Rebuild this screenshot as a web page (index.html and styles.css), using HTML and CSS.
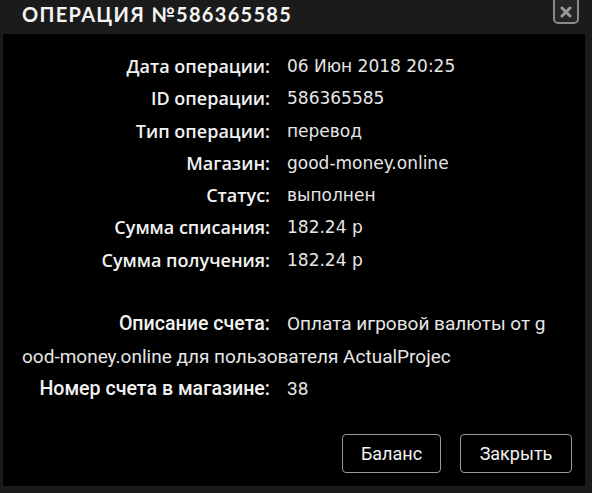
FILE: index.html
```html
<!DOCTYPE html>
<html lang="ru">
<head>
  <meta charset="UTF-8">
  <title>Операция №586365585</title>
  <link rel="stylesheet" href="styles.css">
</head>
<body>
  <div class="modal">
    <!-- Header -->
    <div class="modal-header">
      <h1>Операция №586365585</h1>
      <button class="close-btn" title="Закрыть">
        <svg width="12" height="12" viewBox="0 0 12 12"><path d="M2 2 L10 10 M10 2 L2 10" stroke="#9a9a9a" stroke-width="3" stroke-linecap="round"/></svg>
      </button>
    </div>

    <!-- Body -->
    <div class="modal-body">
      <div class="row"><span class="label">Дата операции:</span><span class="value">06 Июн 2018 20:25</span></div>
      <div class="row"><span class="label">ID операции:</span><span class="value">586365585</span></div>
      <div class="row"><span class="label">Тип операции:</span><span class="value">перевод</span></div>
      <div class="row"><span class="label">Магазин:</span><span class="value">good-money.online</span></div>
      <div class="row"><span class="label">Статус:</span><span class="value">выполнен</span></div>
      <div class="row"><span class="label">Сумма списания:</span><span class="value">182.24 р</span></div>
      <div class="row"><span class="label">Сумма получения:</span><span class="value">182.24 р</span></div>
      <div class="row empty"></div>
      <p class="row alt desc"><span class="label">Описание счета:</span><span class="value">Оплата игровой валюты от good-money.online для пользователя ActualProjec</span></p>
      <div class="row alt"><span class="label">Номер счета в магазине:</span><span class="value">38</span></div>

      <div class="actions">
        <button class="btn">Баланс</button>
        <button class="btn">Закрыть</button>
      </div>
    </div>
  </div>
</body>
</html>
```

FILE: styles.css
```css
/* General */
body {
  margin: 0;
  background: #1b1b1b;
  font-family: 'DejaVu Sans', sans-serif;
  color: #f2f2f2;
}

.modal {
  width: 592px;
  height: 493px;
  background: #1b1b1b;
  overflow: hidden;
}

/* Header */
.modal-header {
  height: 34px;
  display: flex;
  justify-content: space-between;
  align-items: flex-start;
  padding: 0 13px 0 22px;
}

.modal-header h1 {
  margin: 0;
  padding-top: 2px;
  font-family: 'Lato', sans-serif;
  font-size: 20px;
  font-weight: 700;
  letter-spacing: 1.3px;
  text-transform: uppercase;
  line-height: 24px;
  color: #f4f4f4;
}

.close-btn {
  width: 26px;
  height: 28px;
  margin-top: -4px;
  background: #262626;
  border: 2px solid #8a8a8a;
  border-radius: 5px;
  display: flex;
  align-items: center;
  justify-content: center;
  padding: 0;
  padding-top: 3px;
}

/* Body */
.modal-body {
  margin: 0 7px 0 3px;
  height: 452px;
  background: #000;
  padding: 16px 13px 0 19px;
  box-sizing: border-box;
}

.row {
  margin: 0;
  line-height: 32.3px;
  font-size: 17px;
}

.row.empty {
  height: 32.3px;
}

.label {
  display: inline-block;
  vertical-align: top;
  width: 248px;
  text-align: right;
  font-family: 'Open Sans', sans-serif;
  font-size: 18px;
  font-weight: 600;
  margin-right: 17px;
}

.value {
  font-weight: 400;
  color: #e6e6e6;
}

/* Description rows */
.row.alt {
  font-family: 'Roboto', sans-serif;
  font-size: 19px;
  word-break: break-all;
}

.row.desc {
  margin-right: 20px;
}

.row.alt .label {
  font-family: 'Roboto', sans-serif;
  font-size: 19.6px;
  font-weight: 500;
  margin-right: 17px;
}

.row.alt .value {
  font-weight: 400;
}

/* Buttons */
.actions {
  display: flex;
  justify-content: flex-end;
  gap: 19px;
  margin-top: 29px;
}

.btn {
  height: 39px;
  padding: 0;
  background: #000;
  color: #f2f2f2;
  border: 1.5px solid #9a9a9a;
  border-radius: 4px;
  font-family: 'Roboto', sans-serif;
  font-size: 18px;
}

.btn:first-child {
  width: 99px;
}

.btn:last-child {
  width: 112px;
}
```
